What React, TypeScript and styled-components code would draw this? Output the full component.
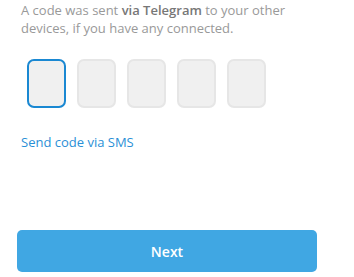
import { useState } from 'react';
import styled, { createGlobalStyle } from 'styled-components';

const GlobalStyle = createGlobalStyle`
	html, body {
		margin: 0;
		padding: 0;
		background: #fff;
		font-family: 'Open Sans', 'Liberation Sans', sans-serif;
	}
`;

const Page = styled.div`
	width: 354px;
	height: 277px;
	box-sizing: border-box;
	padding: 1px 0 0 0;
	display: flex;
	flex-direction: column;
`;

const Hint = styled.p`
	margin: 0 0 0 21px;
	font-size: 13px;
	line-height: 18px;
	color: #999;
	width: 300px;

	b {
		font-weight: 600;
		color: #777;
	}
`;

const CodeRow = styled.div`
	display: flex;
	gap: 11px;
	margin: 22px 0 0 27px;
`;

const Digit = styled.input<{ $active?: boolean }>`
	box-sizing: border-box;
	width: 39px;
	height: 49px;
	border-radius: 7px;
	border: 2px solid ${(p) => (p.$active ? '#1a88d2' : '#e6e6e6')};
	background: #f0f0f0;
	outline: none;
	padding: 0;
	text-align: center;
	font-family: inherit;
	font-size: 20px;
	color: #333;
`;

const SmsLink = styled.a`
	margin: 25px 0 0 21px;
	font-size: 13px;
	line-height: 18px;
	color: #2a8fd6;
	text-decoration: none;
	cursor: pointer;
	align-self: flex-start;
`;

const NextButton = styled.button`
	margin: auto 0 5px 17px;
	width: 300px;
	height: 42px;
	border: none;
	border-radius: 5px;
	background: #40a7e3;
	color: #fff;
	font-family: inherit;
	font-size: 14px;
	font-weight: 600;
	cursor: pointer;
`;

const App = () => {
	const [digits, setDigits] = useState<string[]>(['', '', '', '', '']);

	return (
		<Page>
			<GlobalStyle />
			<Hint>
				A code was sent <b>via Telegram</b> to your other devices, if you have any connected.
			</Hint>
			<CodeRow>
				{digits.map((d, i) => (
					<Digit
						key={i}
						$active={i === 0}
						value={d}
						maxLength={1}
						onChange={(e) => {
							const next = [...digits];
							next[i] = e.target.value;
							setDigits(next);
						}}
					/>
				))}
			</CodeRow>
			<SmsLink>Send code via SMS</SmsLink>
			<NextButton type='button'>Next</NextButton>
		</Page>
	);
};

export default App;
